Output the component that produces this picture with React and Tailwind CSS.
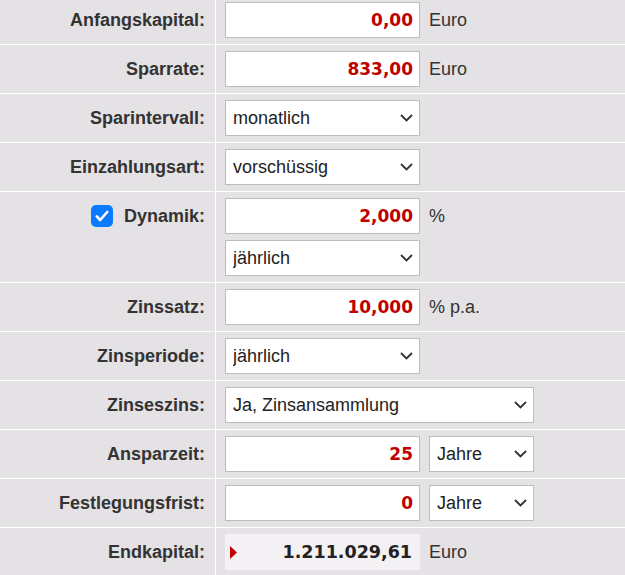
import React from 'react';

const sans = "font-['Liberation_Sans',Arial,sans-serif]";

function Chevron() {
  return (
    <svg className="pointer-events-none absolute right-[7px] top-1/2 -translate-y-1/2" width="13" height="8" viewBox="0 0 13 8" fill="none">
      <path d="M1 1l5.5 5.5L12 1" stroke="#333" strokeWidth="1.8" />
    </svg>
  );
}

function NumberBox({ value }) {
  return (
    <input
      readOnly
      value={value}
      className="h-[36px] w-[195px] border border-[#bdbdbd] bg-white pr-[6px] text-right font-['DejaVu_Sans',sans-serif] text-[17px] font-bold text-[#c00000] outline-none"
    />
  );
}

function Select({ value, options, width = 'w-[195px]' }) {
  return (
    <div className={`relative ${width}`}>
      <select
        value={value}
        onChange={() => {}}
        className={`h-[36px] w-full appearance-none border border-[#bdbdbd] bg-white pl-[7px] text-[18px] text-[#222] outline-none ${sans}`}
      >
        {options.map((o) => (
          <option key={o}>{o}</option>
        ))}
      </select>
      <Chevron />
    </div>
  );
}

function Row({ label, first, children, tall }) {
  return (
    <div className={`flex ${first ? '' : 'border-t border-white'}`}>
      <div
        className={`flex w-[216px] shrink-0 justify-end border-r border-white pr-[10px] ${first ? 'pt-[2px]' : 'pt-[6px]'} pb-[6px] ${tall ? 'items-start' : 'items-center'}`}
      >
        <div className="flex h-[36px] items-center text-[18px] font-bold text-[#333]">{label}</div>
      </div>
      <div className={`flex flex-col gap-[6px] pl-[9px] ${first ? 'pt-[2px]' : 'pt-[6px]'} pb-[6px]`}>{children}</div>
    </div>
  );
}

function Unit({ children }) {
  return <span className="ml-[9px] text-[18px] text-[#333]">{children}</span>;
}

export default function App() {
  return (
    <div className={`h-[575px] w-[625px] overflow-hidden bg-[#e4e2e5] ${sans}`}>
      <Row label="Anfangskapital:" first>
        <div className="flex items-center">
          <NumberBox value="0,00" />
          <Unit>Euro</Unit>
        </div>
      </Row>
      <Row label="Sparrate:">
        <div className="flex items-center">
          <NumberBox value="833,00" />
          <Unit>Euro</Unit>
        </div>
      </Row>
      <Row label="Sparintervall:">
        <Select value="monatlich" options={['monatlich', 'vierteljährlich', 'halbjährlich', 'jährlich']} />
      </Row>
      <Row label="Einzahlungsart:">
        <Select value="vorschüssig" options={['vorschüssig', 'nachschüssig']} />
      </Row>
      <Row
        tall
        label={
          <span className="flex items-center gap-[11px]">
            <span className="flex h-[22px] w-[22px] items-center justify-center rounded-[5px] bg-[#0a7aff]">
              <svg width="14" height="12" viewBox="0 0 14 12" fill="none">
                <path d="M1.8 6.4l3.4 3.6L12.2 2" stroke="white" strokeWidth="2.6" strokeLinecap="round" strokeLinejoin="round" />
              </svg>
            </span>
            Dynamik:
          </span>
        }
      >
        <div className="flex items-center">
          <NumberBox value="2,000" />
          <Unit>%</Unit>
        </div>
        <Select value="jährlich" options={['jährlich', 'monatlich']} />
      </Row>
      <Row label="Zinssatz:">
        <div className="flex items-center">
          <NumberBox value="10,000" />
          <Unit>% p.a.</Unit>
        </div>
      </Row>
      <Row label="Zinsperiode:">
        <Select value="jährlich" options={['jährlich', 'halbjährlich', 'vierteljährlich', 'monatlich']} />
      </Row>
      <Row label="Zinseszins:">
        <Select value="Ja, Zinsansammlung" options={['Ja, Zinsansammlung', 'Nein, Zinsauszahlung']} width="w-[309px]" />
      </Row>
      <Row label="Ansparzeit:">
        <div className="flex items-center gap-[9px]">
          <NumberBox value="25" />
          <Select value="Jahre" options={['Jahre', 'Monate']} width="w-[105px]" />
        </div>
      </Row>
      <Row label="Festlegungsfrist:">
        <div className="flex items-center gap-[9px]">
          <NumberBox value="0" />
          <Select value="Jahre" options={['Jahre', 'Monate']} width="w-[105px]" />
        </div>
      </Row>
      <Row label="Endkapital:">
        <div className="flex items-center">
          <div className="flex h-[36px] w-[195px] items-center justify-between bg-[#f3f1f4] pl-[5px] pr-[8px]">
            <svg width="7" height="13" viewBox="0 0 7 13">
              <path d="M0 0L7 6.5L0 13Z" fill="#c00000" />
            </svg>
            <span className="font-['DejaVu_Sans',sans-serif] text-[17.5px] font-bold text-[#222]">1.211.029,61</span>
          </div>
          <Unit>Euro</Unit>
        </div>
      </Row>
    </div>
  );
}
